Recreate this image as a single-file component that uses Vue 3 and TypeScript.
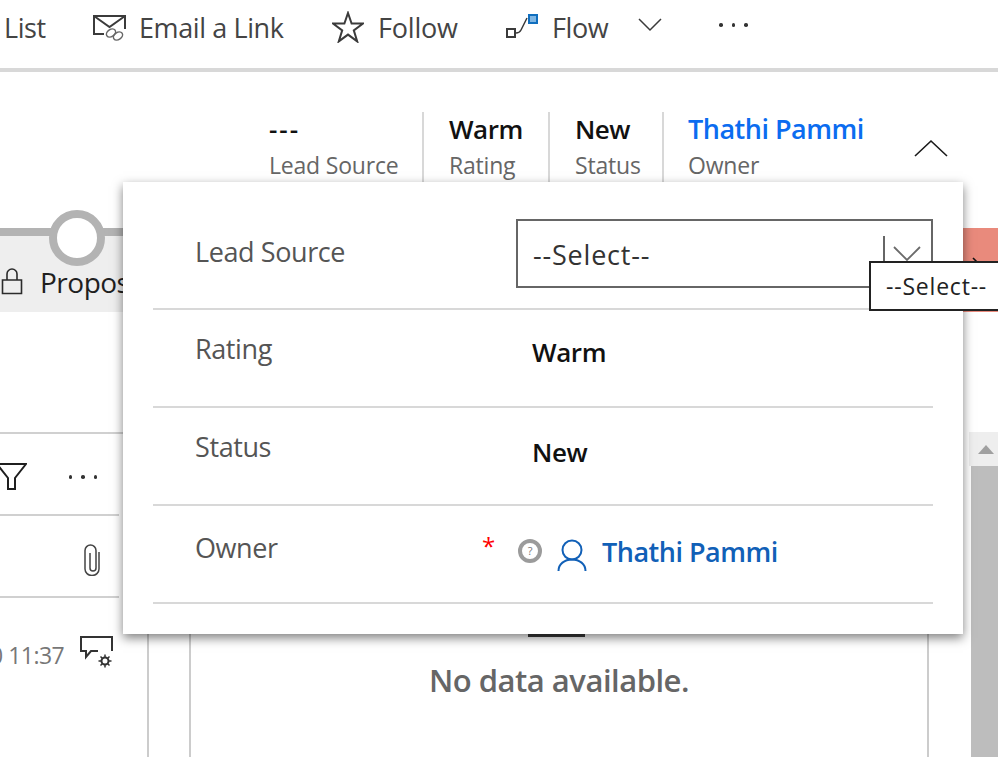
<script setup lang="ts">
const flyoutRows = [
  { label: 'Rating', value: 'Warm', key: 'rating' },
  { label: 'Status', value: 'New', key: 'status' },
]
</script>

<template>
  <div class="page">
    <div class="toolbar">
      <span class="tb-text tb-list">List</span>
      <svg class="tb-icon tb-mail" width="33" height="28" viewBox="0 0 33 28" fill="none" stroke="#3b3b3b" stroke-width="2">
        <path d="M11 19H1V1H32V14M1 1l15.500 11L32 1" />
        <ellipse cx="18" cy="18" rx="5" ry="3.500" transform="rotate(-35 18 18)" stroke="#666" stroke-width="1.500" />
        <ellipse cx="25" cy="21" rx="5" ry="3.500" transform="rotate(-35 25 21)" stroke="#666" stroke-width="1.500" />
      </svg>
      <span class="tb-text tb-email">Email a Link</span>
      <svg class="tb-icon tb-star" width="32" height="32" viewBox="0 0 32 32" fill="none" stroke="#3b3b3b" stroke-width="2">
        <path d="M16 2l3.600 10.600H31l-9.200 6.800 3.400 11L16 23.600 6.800 30.400l3.400-11L1 12.600h11.400z" />
      </svg>
      <span class="tb-text tb-follow">Follow</span>
      <svg class="tb-icon tb-flow" width="33" height="26" viewBox="0 0 33 26">
        <rect x="1" y="15" width="8" height="8" fill="#fff" stroke="#3b3b3b" stroke-width="2" />
        <path d="M10 19c3 0 4-1 5-3l6-12" fill="none" stroke="#3b3b3b" stroke-width="1.500" />
        <rect x="23" y="1" width="8" height="8" fill="#7fb6e3" stroke="#106ebe" stroke-width="2" />
      </svg>
      <span class="tb-text tb-flow-label">Flow</span>
      <svg class="tb-chevron" width="24" height="14" viewBox="0 0 24 14" fill="none" stroke="#3b3b3b" stroke-width="1.500">
        <path d="M1 1l11 11L23 1" />
      </svg>
      <div class="dots tb-dots"><i /><i /><i /></div>
    </div>

    <div class="header">
      <div class="field field-first">
        <div class="field-value field-dashes">---</div>
        <div class="field-label">Lead Source</div>
      </div>
      <div class="field field-rating">
        <div class="field-value">Warm</div>
        <div class="field-label">Rating</div>
      </div>
      <div class="field field-status">
        <div class="field-value">New</div>
        <div class="field-label">Status</div>
      </div>
      <div class="field field-owner">
        <div class="field-value owner-link">Thathi Pammi</div>
        <div class="field-label">Owner</div>
      </div>
      <svg class="header-chevron" width="34" height="18" viewBox="0 0 34 18" fill="none" stroke="#1a1a1a" stroke-width="1.600">
        <path d="M1 17L17 2l16 15" />
      </svg>
    </div>

    <div class="stage">
      <div class="stage-line" />
      <div class="stage-band">
        <svg class="lock" width="22" height="28" viewBox="0 0 22 28" fill="none" stroke="#2b2b2b" stroke-width="1.600">
          <path d="M1.500 13h19v13.500h-19zM6 13V7a5 5 0 0 1 10 0v6" />
        </svg>
        <span class="stage-name">Propos</span>
      </div>
      <div class="stage-circle" />
      <div class="stage-active">
        <svg width="12" height="20" viewBox="0 0 12 20" fill="none" stroke="#111" stroke-width="1.600">
          <path d="M2 2l8 8-8 8" />
        </svg>
      </div>
    </div>

    <div class="content">
      <div class="timeline">
        <div class="timeline-row timeline-tools">
          <svg width="27" height="30" viewBox="0 0 27 30" fill="none" stroke="#1f1f1f" stroke-width="2">
            <path d="M-3 2H26L15 16v11H8V16z" />
          </svg>
          <div class="dots"><i /><i /><i /></div>
        </div>
        <div class="timeline-row timeline-attach">
          <svg width="16" height="32" viewBox="0 0 16 32" fill="none" stroke="#444" stroke-width="1.500">
            <path d="M15 8v17a7 6.500 0 0 1-14 0V6.500a5.500 5.500 0 0 1 11 0V24a3 3 0 0 1-6 0V9" />
          </svg>
        </div>
        <div class="timeline-entry">
          <span class="timeline-time">0 11:37</span>
          <svg width="34" height="32" viewBox="0 0 34 32" fill="none" stroke="#333" stroke-width="2">
            <path d="M18 15H11L6 21V15H1V1H32V15" />
            <circle cx="25" cy="25" r="3.500" stroke-width="2" />
            <path d="M25 18.500v3M25 28.500v3M18.500 25h3M28.500 25h3M20.500 20.500l2 2M27.500 27.500l2 2M29.500 20.500l-2 2M22.500 27.500l-2 2" stroke-width="1.500" />
          </svg>
        </div>
      </div>
      <div class="main-panel">
        <div class="panel-box">
          <div class="panel-tab" />
          <div class="no-data">No data available.</div>
        </div>
      </div>
      <div class="scrollbar">
        <div class="scroll-up"><span class="scroll-arrow" /></div>
        <div class="scroll-thumb" />
      </div>
    </div>

    <div class="flyout">
      <div class="fly-row fly-row-select">
        <div class="fly-label">Lead Source</div>
        <div class="select-box">
          <span class="select-text">--Select--</span>
          <span class="select-divider" />
          <svg width="28" height="16" viewBox="0 0 28 16" fill="none" stroke="#6b6b6b" stroke-width="1.800">
            <path d="M1 1l13 13L27 1" />
          </svg>
        </div>
      </div>
      <div v-for="row in flyoutRows" :key="row.key" class="fly-row">
        <div class="fly-label">{{ row.label }}</div>
        <div class="fly-value" :class="`fly-value-${row.key}`">{{ row.value }}</div>
      </div>
      <div class="fly-row fly-row-owner">
        <div class="fly-label">Owner</div>
        <span class="required">*</span>
        <span class="help">?</span>
        <svg class="owner-icon" width="30" height="34" viewBox="0 0 30 34" fill="none" stroke="#1160b7" stroke-width="2">
          <circle cx="15" cy="12" r="9.500" />
          <path d="M1.500 33c0-7 6-11.500 13.500-11.500S28.500 26 28.500 33" />
        </svg>
        <span class="fly-owner">Thathi Pammi</span>
      </div>
    </div>

    <div class="tooltip">--Select--</div>
  </div>
</template>

<style scoped>
.page {
  position: relative;
  width: 998px;
  height: 757px;
  overflow: hidden;
  background: #fff;
  font-family: "Open Sans", "Noto Sans", sans-serif;
  color: #444;
}

.toolbar {
  display: flex;
  align-items: center;
  height: 72px;
  padding-bottom: 14px;
  box-sizing: border-box;
  border-bottom: 4px solid #d8d8d8;
}

.tb-text {
  font-size: 27px;
  color: #444;
  letter-spacing: -0.4px;
  white-space: nowrap;
}

.tb-list { margin-left: 4px; width: 40px; }
.tb-mail { margin-left: 49px; margin-top: 3px; }
.tb-email { margin-left: 13px; width: 145px; }
.tb-star { margin-left: 48px; }
.tb-follow { margin-left: 14px; width: 79px; letter-spacing: -0.2px; }
.tb-flow { margin-left: 49px; }
.tb-flow-label { margin-left: 13px; width: 57px; }
.tb-chevron { margin-left: 29px; margin-top: -4px; }
.tb-dots { margin-left: 57px; margin-top: -4px; gap: 9px; }

.dots {
  display: flex;
  gap: 9px;
}

.dots i {
  display: block;
  width: 3.5px;
  height: 3.5px;
  border-radius: 50%;
  background: #333;
}

.header {
  display: flex;
  align-items: flex-start;
  height: 110px;
  padding: 40px 0 0 269px;
  box-sizing: border-box;
}

.field {
  height: 70px;
  padding-left: 25px;
  border-left: 2px solid #d8d8d8;
  box-sizing: border-box;
  flex: none;
}

.field-first {
  width: 153px;
  padding-left: 0;
  border-left: 0;
}

.field-rating { width: 126px; }
.field-status { width: 114px; }

.field-owner {
  width: 252px;
  padding-left: 24px;
}

.field-value {
  margin-top: -1px;
  font-size: 26px;
  line-height: 36px;
  font-weight: 600;
  color: #111;
  white-space: nowrap;
  letter-spacing: -0.5px;
}

.field-dashes {
  letter-spacing: 2px;
}

.field-label {
  margin-top: 3px;
  font-size: 23px;
  line-height: 30px;
  color: #666;
  white-space: nowrap;
  letter-spacing: -0.2px;
}

.owner-link {
  font-size: 27px;
  color: #0b6cf0;
}

.header-chevron {
  margin-top: 27px;
  flex: none;
}

.stage {
  position: relative;
  height: 130px;
  padding-top: 46px;
  box-sizing: border-box;
}

.stage-line {
  height: 8px;
  background: #b3b3b3;
}

.stage-band {
  display: flex;
  align-items: center;
  gap: 17px;
  height: 76px;
  padding: 0 0 0 1px;
  box-sizing: border-box;
  background: #eeeeee;
}

.lock {
  margin-top: 13px;
}

.stage-name {
  margin-top: 15px;
  font-size: 28px;
  color: #1f1f1f;
  letter-spacing: -0.5px;
}

.stage-circle {
  position: absolute;
  left: 49px;
  top: 28px;
  width: 56px;
  height: 56px;
  box-sizing: border-box;
  border: 8px solid #b3b3b3;
  border-radius: 50%;
  background: #fff;
}

.stage-active {
  position: absolute;
  right: 0;
  top: 46px;
  width: 35px;
  height: 84px;
  padding: 28px 0 0 8px;
  box-sizing: border-box;
  background: #e98a7c;
}

.content {
  display: flex;
  height: 445px;
}

.timeline {
  width: 149px;
  flex: none;
  padding-top: 120px;
  box-sizing: border-box;
  border-right: 2px solid #ccc;
}

.timeline-row {
  display: flex;
  align-items: center;
  justify-content: space-between;
  height: 82px;
  width: 119px;
  box-sizing: border-box;
  border-top: 2px solid #d0d0d0;
}

.timeline-tools {
  padding: 6px 26px 0 0;
  width: 123px;
}

.timeline-attach {
  justify-content: flex-end;
  padding: 8px 19px 0 0;
}

.timeline-entry {
  display: flex;
  align-items: flex-start;
  justify-content: space-between;
  width: 119px;
  padding: 38px 5px 0 0;
  box-sizing: border-box;
  border-top: 2px solid #d0d0d0;
}

.timeline-time {
  margin-left: -10px;
  margin-top: 3px;
  font-size: 23px;
  color: #777;
  white-space: nowrap;
  letter-spacing: -0.5px;
}

.main-panel {
  flex: 1;
  padding: 120px 40px 0 40px;
  box-sizing: border-box;
}

.panel-box {
  height: 100%;
  box-sizing: border-box;
  border: solid #ccc;
  border-width: 0 2px;
  text-align: center;
}

.panel-tab {
  width: 57px;
  height: 3px;
  margin: 202px auto 0 337px;
  background: #3b3b3b;
}

.no-data {
  margin-top: 22px;
  font-size: 31px;
  font-weight: 600;
  color: #666;
  letter-spacing: -0.5px;
}

.scrollbar {
  width: 29px;
  margin-top: 120px;
  flex: none;
  display: flex;
  flex-direction: column;
}

.scroll-up {
  display: flex;
  align-items: center;
  justify-content: center;
  height: 34px;
  padding-left: 5px;
  background: #eeeeee;
}

.scroll-arrow {
  width: 0;
  height: 0;
  border: 8px solid transparent;
  border-top: 0;
  border-bottom: 9px solid #a0a0a0;
}

.scroll-thumb {
  flex: 1;
  margin-left: 2px;
  background: #bdbdbd;
}

.flyout {
  position: absolute;
  left: 123px;
  top: 182px;
  width: 840px;
  height: 452px;
  padding: 29px 30px 0;
  box-sizing: border-box;
  background: #fff;
  box-shadow: 0 4px 10px rgba(0, 0, 0, 0.5);
}

.fly-row {
  position: relative;
  display: flex;
  align-items: center;
  height: 98px;
  box-sizing: border-box;
  border-bottom: 2px solid #d8d8d8;
}

.fly-row-select {
  height: 99px;
  padding-bottom: 12px;
}

.fly-label {
  width: 363px;
  padding-left: 42px;
  box-sizing: border-box;
  margin-top: -20px;
  font-size: 27px;
  color: #555;
  letter-spacing: -0.4px;
  flex: none;
}

.fly-row-select .fly-label {
  margin-top: -4px;
}

.fly-row-owner .fly-label {
  margin-top: -14px;
}

.fly-value {
  margin-left: 16px;
  font-size: 26px;
  font-weight: 600;
  color: #111;
  letter-spacing: -0.4px;
}

.fly-value-rating { margin-top: -12px; }
.fly-value-status { margin-top: -8px; }

.select-box {
  display: flex;
  align-items: flex-start;
  width: 417px;
  height: 69px;
  padding-left: 15px;
  box-sizing: border-box;
  border: 2px solid #666;
}

.select-text {
  flex: 1;
  font-size: 27px;
  line-height: 67px;
  color: #333;
  letter-spacing: 0.8px;
}

.select-divider {
  width: 2px;
  height: 50px;
  margin: 15px 8px 0 0;
  background: #666;
}

.select-box svg {
  margin: 25px 10px 0 0;
  flex: none;
}

.required {
  position: absolute;
  left: 329px;
  top: 23px;
  font-size: 24px;
  color: #f00;
}

.help {
  position: absolute;
  left: 365px;
  top: 33px;
  width: 24px;
  height: 24px;
  box-sizing: border-box;
  border: 4px solid #9b9b9b;
  border-radius: 50%;
  font-size: 11px;
  line-height: 16px;
  text-align: center;
  color: #777;
}

.owner-icon {
  position: absolute;
  left: 404px;
  top: 32px;
}

.fly-owner {
  position: absolute;
  left: 449px;
  top: 27px;
  font-size: 27px;
  font-weight: 600;
  color: #1160b7;
  white-space: nowrap;
  letter-spacing: -0.5px;
}

.tooltip {
  position: absolute;
  left: 869px;
  top: 261px;
  width: 140px;
  height: 50px;
  padding-left: 15px;
  box-sizing: border-box;
  border: 2px solid #222;
  background: #fff;
  font-size: 23px;
  line-height: 46px;
  color: #222;
  letter-spacing: 0.8px;
  white-space: nowrap;
}
</style>
